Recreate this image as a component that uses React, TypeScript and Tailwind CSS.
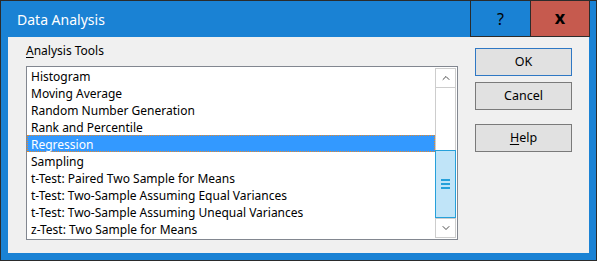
import { ChevronUp, ChevronDown } from 'lucide-react'

const tools = [
  'Histogram',
  'Moving Average',
  'Random Number Generation',
  'Rank and Percentile',
  'Regression',
  'Sampling',
  't-Test: Paired Two Sample for Means',
  't-Test: Two-Sample Assuming Equal Variances',
  't-Test: Two-Sample Assuming Unequal Variances',
  'z-Test: Two Sample for Means',
]

const font = { fontFamily: '"Noto Sans", "Open Sans", sans-serif' }

function Scrollbar() {
  return (
    <div className="my-[1px] mr-[1px] flex w-[21px] flex-col bg-white">
      <div className="flex h-[20px] items-center justify-center border border-[#cdcdcd]">
        <ChevronUp size={12} strokeWidth={1.4} color="#000" />
      </div>
      <div className="h-[62px] border-x border-[#cdcdcd]" />
      <div className="flex h-[68px] flex-col items-center justify-center gap-[2px] border border-[#26a0da] bg-[#c0e4f8]">
        <div className="h-[2px] w-[9px] bg-[#26a0da]" />
        <div className="h-[2px] w-[9px] bg-[#26a0da]" />
        <div className="h-[2px] w-[9px] bg-[#26a0da]" />
      </div>
      <div className="flex h-[20px] items-center justify-center border border-[#cdcdcd]">
        <ChevronDown size={12} strokeWidth={1.4} color="#000" />
      </div>
    </div>
  )
}

function DialogButton({ label, isDefault }: { label: React.ReactNode; isDefault?: boolean }) {
  return (
    <div
      className={`flex h-[28px] w-[97px] items-center justify-center bg-[#e1e1e1] pt-[1px] text-[12.5px] text-black border ${
        isDefault ? 'border-[#2f78c4]' : 'border-[#7a7a7a]'
      }`}
    >
      {label}
    </div>
  )
}

export default function App() {
  return (
    <div
      className="flex h-[261px] w-[597px] flex-col border border-[#2b2b2b] bg-[#1a82d4]"
      style={font}
    >
      <div className="flex h-[36px] items-stretch">
        <div className="flex flex-1 items-center pl-[16px] text-[14px] text-white">Data Analysis</div>
        <div className="flex w-[60px] items-center justify-center border-b border-l border-[#2b2b2b] text-[16px] text-black">
          ?
        </div>
        <div className="flex w-[60px] items-center justify-center border-x border-b border-[#2b2b2b] bg-[#c65a4e] pb-[3px] text-[18px] font-bold text-black">
          x
        </div>
        <div className="w-[6px]" />
      </div>
      <div className="ml-[7px] mr-[7px] mb-[7px] flex flex-1 bg-[#f0f0f0]">
        <div className="ml-[18px] flex w-[432px] flex-col pt-[4px]">
          <div className="h-[20px] text-[12px] leading-[20px] text-black">
            <span className="underline underline-offset-2">A</span>nalysis Tools
          </div>
          <div className="mt-[5px] flex h-[174px] border border-[#828790] bg-white">
            <div className="flex flex-1 flex-col">
              {tools.map((t) =>
                t === 'Regression' ? (
                  <div
                    key={t}
                    className="h-[17px] border border-dotted border-[#e8892b] bg-[#3399ff] pl-[3px] text-[12px] leading-[18px] text-white"
                  >
                    {t}
                  </div>
                ) : (
                  <div key={t} className="h-[17px] whitespace-nowrap pl-[4px] text-[12px] leading-[20px] text-black">
                    {t}
                  </div>
                )
              )}
            </div>
            <Scrollbar />
          </div>
        </div>
        <div className="ml-[17px] flex flex-col pt-[11px]">
          <DialogButton label="OK" isDefault />
          <div className="mt-[6px]">
            <DialogButton label="Cancel" />
          </div>
          <div className="mt-[14px]">
            <DialogButton
              label={
                <span>
                  <span className="underline underline-offset-2">H</span>elp
                </span>
              }
            />
          </div>
        </div>
      </div>
    </div>
  )
}
